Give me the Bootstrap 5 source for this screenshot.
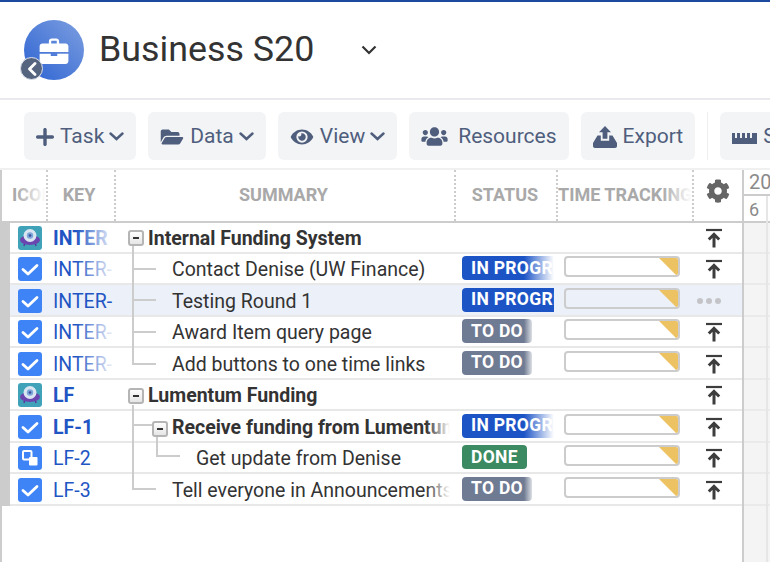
<!DOCTYPE html>
<html lang="en">
<head>
<meta charset="utf-8">
<title>Business S20</title>
<link href="https://cdn.jsdelivr.net/npm/bootstrap@5.3.0/dist/css/bootstrap.min.css" rel="stylesheet">
<style>
html,body{height:562px;overflow:hidden;background:#fff}
body{font-family:Roboto,"Liberation Sans",sans-serif;color:#333}
.page-shell{width:770px;height:562px;overflow:hidden;border-top:2px solid #1c4a9e}
.head-bar{height:98px;border-bottom:2px solid #e9e9ee;padding-left:24px}
.proj-logo{width:60px;height:60px;border-radius:50%;background:linear-gradient(45deg,#2c62d2,#7d9fe0);position:relative;flex:none}
.proj-logo svg.case{position:absolute;left:15px;top:18px}
.back-dot{position:absolute;left:-4px;top:37px;width:23px;height:23px;padding:0;border-radius:50%;background:#56657f;border:1px solid #dfe4ee;display:flex;align-items:center;justify-content:center}
.proj-title{font-size:35.8px;font-weight:400;margin:0 0 0 15px;color:#333;line-height:1;width:262px}
.tool-bar{height:68px;padding:12px 0 0 24px;gap:12px;width:800px}
.tool-btn{height:48px;background:#f3f4f6;border:0;border-radius:6px;color:#4f5e7d;font-size:21px;line-height:1;padding:1px 12px 0;display:flex;align-items:center;flex:none;white-space:nowrap;--bs-btn-hover-bg:#f3f4f6;--bs-btn-hover-color:#4f5e7d}
.tool-btn .lead-ic{margin-right:6px}
.tool-btn .lead-ic.wide-gap{margin-right:10px}
.tool-btn .chev-ic{margin-left:5px}
.tool-sep{width:1px;height:48px;background:#eceef0;flex:none}
.grid-zone{height:394px;border-top:2px solid #f0f0f0}
.grid-left{width:744px;flex:none;border-left:2px solid #ccc;border-right:2px solid #ccc;height:100%;position:relative}
.head-row{height:53px;border-bottom:2px solid #ccc;font-size:18px;font-weight:700;color:#a9a9a9}
.head-cell{height:100%;display:flex;align-items:center;justify-content:center;overflow:hidden;white-space:nowrap;flex:none;position:relative;border-right:2px dotted #ccc;padding-bottom:2px}
.c-ico{width:46px;justify-content:flex-start;padding-left:10px}.c-key{width:68px;padding-right:4px}.c-sum{width:340px;padding-right:3px}.c-stat{width:102px;padding-right:2px}.c-time{width:136px;justify-content:flex-start}.c-act{width:48px;border-right:0}
.gear-ic{margin-bottom:8px}
.head-cell.fades::after{content:"";position:absolute;right:0;top:0;bottom:0;width:30px;background:linear-gradient(90deg,rgba(255,255,255,0),#fff)}
.tree-row{height:31.5px;border-bottom:2px solid #e8e8e8;position:relative;background:#fff;font-size:19.5px;white-space:nowrap}
.tree-row.first-row{height:30.5px}
.tree-row.hovered{background:#ecf0f8}
.tree-row::before{content:"";position:absolute;left:0;top:-2px;bottom:-2px;width:8px;background:#ccc}
.row-cell{height:100%;display:flex;align-items:center;flex:none;overflow:hidden;position:relative}
.row-ico{width:46px;padding:2px 0 0 16px}
.row-key{width:68px;padding:3px 0 0 5px;color:#1f56c4}
.row-key.is-bold,.row-sum.is-bold{font-weight:700}
.row-sum{width:340px;color:#333;padding:3px 0 0 56px}
.row-sum.lvl-top{padding-left:32px}
.row-sum.lvl-sub{padding-left:80px}
.row-sum::after{content:"";position:absolute;right:0;top:0;bottom:0;width:30px;background:linear-gradient(90deg,rgba(255,255,255,0),#fff 80%)}
.hovered .row-sum::after,.hovered .row-key::after{display:none}
.row-key::after{content:"";position:absolute;right:0;top:0;bottom:0;width:40px;background:linear-gradient(90deg,rgba(255,255,255,0),#fff)}
.row-key.short-key::after{display:none}
.row-stat{width:98px;padding-left:6px}
.row-time{width:140px;padding-left:10px}
.row-act{width:48px;justify-content:center;padding:2px 8px 0 0}
.stat-tag{font-size:17.5px;font-weight:700;line-height:1;letter-spacing:.3px;border-radius:4px;padding:0 9px;height:24px;display:flex;align-items:center;color:#fff;flex:none}
.tag-prog{background:#1c54c6}.tag-todo{background:#6f7b93}.tag-done{background:#3b8a62}
.stat-fade::after{content:"";position:absolute;top:0;bottom:0;background:linear-gradient(90deg,rgba(255,255,255,0),#fff)}
.fade-prog::after{right:0;width:30px}
.fade-todo::after{left:68px;width:9px;background:linear-gradient(90deg,rgba(255,255,255,0),rgba(255,255,255,.85))}
.track-box{width:116px;height:21px;margin-bottom:3px;border:2px solid #ccc;border-radius:4px;position:relative;overflow:hidden}
.track-box::after{content:"";position:absolute;right:0;top:0;border-top:19px solid #ecc262;border-left:19px solid transparent}
.dots-more{display:flex;gap:3px;margin-right:10px}
.dots-more i{width:6px;height:6px;background:#c4c4c8;border-radius:50%;display:block}
.wire-layer{position:absolute;left:0;top:0;pointer-events:none;z-index:3}
.time-side{flex:1;height:100%;background:#f4f4f4;position:relative;overflow:hidden}
.time-year{height:26px;background:#fff;border-bottom:2px solid #ccc;color:#8a8a8a;font-size:20px;padding-left:5px;line-height:24px}
.time-day{height:27px;background:#fff;border-bottom:2px solid #ccc;color:#8a8a8a;font-size:18px;line-height:28px;padding-left:5px}
.time-row{height:31.5px;border-bottom:2px solid #eaeaea;background:#f4f4f4}
.time-row.first-row{height:30.5px}
.time-col{position:absolute;left:22px;top:26px;bottom:0;width:2px;background:#e6e6e6}
</style>
</head>
<body>
<svg width="0" height="0" class="position-absolute">
  <symbol id="i-saucer" viewBox="0 0 24 24"><rect width="24" height="24" rx="3" fill="#3fa2b8"/><path d="M6 20l1-4h10l1 4" stroke="#5b3a9e" stroke-width="1.500" fill="none"/><ellipse cx="12" cy="14" rx="10" ry="5" fill="#6a45b0"/><circle cx="12" cy="9.500" r="6.500" fill="#d9e6f2"/><circle cx="12" cy="9.500" r="3.200" fill="#7fa6d8"/><circle cx="12" cy="9.500" r="1.300" fill="#3a4d9a"/></symbol>
  <symbol id="i-check" viewBox="0 0 24 24"><rect width="24" height="24" rx="3" fill="#3f84f6"/><path d="M5 12.500 10 17l9-8.500" fill="none" stroke="#fff" stroke-width="2.800" stroke-linecap="round" stroke-linejoin="round"/></symbol>
  <symbol id="i-story" viewBox="0 0 24 24"><rect width="24" height="24" rx="3" fill="#3f84f6"/><rect x="5" y="5" width="8.500" height="8.500" rx="1" fill="#3f84f6" stroke="#fff" stroke-width="2"/><rect x="11" y="11" width="8.500" height="8.500" rx="1" fill="#fff"/></symbol>
  <symbol id="i-up" viewBox="0 0 18 20"><path d="M1 2h16" stroke="#3d3d3d" stroke-width="2.200"/><path d="M9 19.500V7M3.800 11.500 9 6.300l5.200 5.200" fill="none" stroke="#3d3d3d" stroke-width="3"/></symbol>
  <symbol id="i-chev" viewBox="0 0 15 9"><path d="M1.500 1.500 7.500 7l6-5.500" fill="none" stroke="#4f5e7d" stroke-width="2.400" stroke-linecap="round"/></symbol>
</svg>
<div class="page-shell">
  <header class="head-bar d-flex align-items-center">
    <div class="proj-logo">
      <svg class="case" width="30" height="26" viewBox="0 0 31 28"><path fill="#fff" d="M10 3.500C10 1.600 11.400.5 13 .5h5c1.600 0 3 1.100 3 3V6h7c1.600 0 3 1.200 3 3v6H0V9c0-1.800 1.400-3 3-3h7V3.500zm2.500 0V6h6V3.500c0-.3-.2-.5-.5-.5h-5c-.3 0-.5.200-.5.500zM0 17h12v2.500h7V17h12v8c0 1.700-1.400 3-3 3H3c-1.600 0-3-1.300-3-3v-8z"/></svg>
      <button class="back-dot" aria-label="Back"><svg width="10" height="14" viewBox="0 0 10 14"><path d="M8 1.500 2.500 7 8 12.500" fill="none" stroke="#fff" stroke-width="2.800" stroke-linecap="round" stroke-linejoin="round"/></svg></button>
    </div>
    <h1 class="proj-title">Business S20</h1>
    <svg width="16" height="10" viewBox="0 0 16 10"><path d="M1.500 1.500 8 8l6.500-6.500" fill="none" stroke="#333" stroke-width="2.200"/></svg>
  </header>
  <div class="tool-bar d-flex">
    <button class="btn tool-btn"><svg class="lead-ic" width="18" height="18" viewBox="0 0 18 18"><path fill="#4f5e7d" d="M7.300 1.500C7.300.7 8 0 9 0s1.700.7 1.700 1.500v5.800h5.800c.8 0 1.500.7 1.500 1.700s-.7 1.700-1.500 1.700h-5.800v5.800c0 .8-.7 1.500-1.700 1.500s-1.700-.7-1.700-1.500v-5.800H1.500C.7 10.700 0 10 0 9s.7-1.700 1.500-1.700h5.800z"/></svg>Task<svg class="chev-ic" width="15" height="9"><use href="#i-chev"/></svg></button>
    <button class="btn tool-btn"><svg class="lead-ic" width="24" height="20" viewBox="0 0 576 512"><path fill="#4f5e7d" d="M572.694 292.093L500.27 416.248A63.997 63.997 0 0 1 444.989 448H45.025c-18.523 0-30.064-20.093-20.731-36.093l72.424-124.155A64 64 0 0 1 152 256h399.964c18.523 0 30.064 20.093 20.73 36.093zM152 224h328v-48c0-26.51-21.49-48-48-48H272l-64-64H48C21.49 64 0 85.49 0 112v278.046l69.077-118.418C86.214 242.25 117.989 224 152 224z"/></svg>Data<svg class="chev-ic" width="15" height="9"><use href="#i-chev"/></svg></button>
    <button class="btn tool-btn"><svg class="lead-ic" width="24" height="20" viewBox="0 0 576 512"><path fill="#4f5e7d" d="M572.520 241.400C518.290 135.590 410.930 64 288 64S57.680 135.640 3.480 241.410a32.350 32.350 0 0 0 0 29.190C57.710 376.410 165.070 448 288 448s230.320-71.640 284.520-177.410a32.350 32.350 0 0 0 0-29.190zM288 400a144 144 0 1 1 144-144 143.930 143.930 0 0 1-144 144zm0-240a95.310 95.310 0 0 0-25.310 3.790 47.850 47.850 0 0 1-66.900 66.900A95.780 95.780 0 1 0 288 160z"/></svg>View<svg class="chev-ic" width="15" height="9"><use href="#i-chev"/></svg></button>
    <button class="btn tool-btn"><svg class="lead-ic wide-gap" width="27" height="21" viewBox="0 0 640 512"><path fill="#4f5e7d" d="M96 224c35.300 0 64-28.700 64-64s-28.700-64-64-64-64 28.700-64 64 28.700 64 64 64zm448 0c35.300 0 64-28.700 64-64s-28.700-64-64-64-64 28.700-64 64 28.700 64 64 64zm32 32h-64c-17.600 0-33.500 7.100-45.100 18.600 40.300 22.100 68.900 62 75.100 109.400h66c17.700 0 32-14.300 32-32v-32c0-35.300-28.700-64-64-64zm-256 0c61.900 0 112-50.100 112-112S381.900 32 320 32 208 82.100 208 144s50.100 112 112 112zm76.800 32h-8.300c-20.800 10-43.900 16-68.500 16s-47.600-6-68.500-16h-8.300C179.600 288 128 339.600 128 403.200V432c0 26.500 21.500 48 48 48h288c26.500 0 48-21.500 48-48v-28.800c0-63.600-51.600-115.200-115.200-115.200zm-223.700-13.400C161.500 263.100 145.600 256 128 256H64c-35.300 0-64 28.700-64 64v32c0 17.700 14.300 32 32 32h65.900c6.300-47.400 34.900-87.300 75.200-109.400z"/></svg>Resources</button>
    <button class="btn tool-btn"><svg class="lead-ic" width="24" height="22" viewBox="0 0 24 22"><path fill="#4f5e7d" d="M12 0l6 6.200h-3.600v6.600H9.600V6.200H6zM4.500 9.500h3.300v5.300h8.400V9.500h3.300L24 17v3c0 1.200-.8 2-2 2H2c-1.200 0-2-.8-2-2v-3z"/></svg>Export</button>
    <div class="tool-sep"></div>
    <button class="btn tool-btn"><svg class="lead-ic" width="25" height="14" viewBox="0 0 25 14"><path fill="#4f5e7d" d="M0 3h3v5h2V3h3v5h2V3h3v5h2V3h3v5h2V3h5v11H0z"/></svg>Show</button>
  </div>
  <div class="grid-zone d-flex">
    <div class="grid-left">
      <div class="head-row d-flex">
        <div class="head-cell c-ico fades">ICON</div>
        <div class="head-cell c-key">KEY</div>
        <div class="head-cell c-sum">SUMMARY</div>
        <div class="head-cell c-stat">STATUS</div>
        <div class="head-cell c-time fades">TIME TRACKING</div>
        <div class="head-cell c-act"><svg class="gear-ic" width="24" height="24" viewBox="0 0 512 512"><path fill="#666" d="M487.400 315.700l-42.600-24.600c4.300-23.200 4.300-47 0-70.200l42.600-24.600c4.900-2.800 7.100-8.600 5.500-14-11.100-35.600-30-67.800-54.700-94.600-3.800-4.100-10-5.100-14.800-2.300L380.800 110c-17.900-15.400-38.500-27.300-60.800-35.100V25.800c0-5.600-3.900-10.500-9.400-11.700-36.700-8.200-74.300-7.800-109.200 0-5.500 1.200-9.400 6.100-9.400 11.700V75c-22.200 7.900-42.800 19.800-60.800 35.100L88.700 85.500c-4.900-2.800-11-1.900-14.800 2.300-24.700 26.700-43.600 58.900-54.700 94.600-1.700 5.400.6 11.200 5.500 14L67.300 221c-4.300 23.200-4.300 47 0 70.200l-42.600 24.600c-4.900 2.800-7.100 8.600-5.500 14 11.100 35.600 30 67.800 54.700 94.600 3.800 4.100 10 5.100 14.800 2.300l42.600-24.600c17.900 15.400 38.500 27.300 60.800 35.100v49.200c0 5.600 3.900 10.500 9.400 11.700 36.700 8.200 74.300 7.800 109.200 0 5.500-1.200 9.400-6.100 9.400-11.700v-49.200c22.200-7.900 42.800-19.800 60.800-35.100l42.600 24.600c4.900 2.800 11 1.900 14.800-2.300 24.700-26.700 43.600-58.900 54.700-94.600 1.500-5.500-.7-11.300-5.600-14.100zM256 336c-44.100 0-80-35.900-80-80s35.900-80 80-80 80 35.900 80 80-35.900 80-80 80z"/></svg></div>
      </div>

      <div class="tree-row first-row d-flex">
        <div class="row-cell row-ico"><svg width="24" height="24"><use href="#i-saucer"/></svg></div>
        <div class="row-cell row-key is-bold">INTER</div>
        <div class="row-cell row-sum is-bold lvl-top">Internal Funding System</div>
        <div class="row-cell row-stat"></div><div class="row-cell row-time"></div>
        <div class="row-cell row-act"><svg width="18" height="20"><use href="#i-up"/></svg></div>
      </div>
      <div class="tree-row d-flex">
        <div class="row-cell row-ico"><svg width="24" height="24"><use href="#i-check"/></svg></div>
        <div class="row-cell row-key">INTER-</div>
        <div class="row-cell row-sum">Contact Denise (UW Finance)</div>
        <div class="row-cell row-stat stat-fade fade-prog"><span class="badge stat-tag tag-prog">IN PROGRESS</span></div>
        <div class="row-cell row-time"><div class="track-box"></div></div>
        <div class="row-cell row-act"><svg width="18" height="20"><use href="#i-up"/></svg></div>
      </div>
      <div class="tree-row hovered d-flex">
        <div class="row-cell row-ico"><svg width="24" height="24"><use href="#i-check"/></svg></div>
        <div class="row-cell row-key">INTER-</div>
        <div class="row-cell row-sum">Testing Round 1</div>
        <div class="row-cell row-stat"><span class="badge stat-tag tag-prog">IN PROGRESS</span></div>
        <div class="row-cell row-time"><div class="track-box"></div></div>
        <div class="row-cell row-act"><span class="dots-more"><i></i><i></i><i></i></span></div>
      </div>
      <div class="tree-row d-flex">
        <div class="row-cell row-ico"><svg width="24" height="24"><use href="#i-check"/></svg></div>
        <div class="row-cell row-key">INTER-</div>
        <div class="row-cell row-sum">Award Item query page</div>
        <div class="row-cell row-stat stat-fade fade-todo"><span class="badge stat-tag tag-todo">TO DO</span></div>
        <div class="row-cell row-time"><div class="track-box"></div></div>
        <div class="row-cell row-act"><svg width="18" height="20"><use href="#i-up"/></svg></div>
      </div>
      <div class="tree-row d-flex">
        <div class="row-cell row-ico"><svg width="24" height="24"><use href="#i-check"/></svg></div>
        <div class="row-cell row-key">INTER-</div>
        <div class="row-cell row-sum">Add buttons to one time links</div>
        <div class="row-cell row-stat stat-fade fade-todo"><span class="badge stat-tag tag-todo">TO DO</span></div>
        <div class="row-cell row-time"><div class="track-box"></div></div>
        <div class="row-cell row-act"><svg width="18" height="20"><use href="#i-up"/></svg></div>
      </div>
      <div class="tree-row d-flex">
        <div class="row-cell row-ico"><svg width="24" height="24"><use href="#i-saucer"/></svg></div>
        <div class="row-cell row-key is-bold short-key">LF</div>
        <div class="row-cell row-sum is-bold lvl-top">Lumentum Funding</div>
        <div class="row-cell row-stat"></div><div class="row-cell row-time"></div>
        <div class="row-cell row-act"><svg width="18" height="20"><use href="#i-up"/></svg></div>
      </div>
      <div class="tree-row d-flex">
        <div class="row-cell row-ico"><svg width="24" height="24"><use href="#i-check"/></svg></div>
        <div class="row-cell row-key is-bold short-key">LF-1</div>
        <div class="row-cell row-sum is-bold">Receive funding from Lumentum</div>
        <div class="row-cell row-stat stat-fade fade-prog"><span class="badge stat-tag tag-prog">IN PROGRESS</span></div>
        <div class="row-cell row-time"><div class="track-box"></div></div>
        <div class="row-cell row-act"><svg width="18" height="20"><use href="#i-up"/></svg></div>
      </div>
      <div class="tree-row d-flex">
        <div class="row-cell row-ico"><svg width="24" height="24"><use href="#i-story"/></svg></div>
        <div class="row-cell row-key short-key">LF-2</div>
        <div class="row-cell row-sum lvl-sub">Get update from Denise</div>
        <div class="row-cell row-stat"><span class="badge stat-tag tag-done">DONE</span></div>
        <div class="row-cell row-time"><div class="track-box"></div></div>
        <div class="row-cell row-act"><svg width="18" height="20"><use href="#i-up"/></svg></div>
      </div>
      <div class="tree-row d-flex">
        <div class="row-cell row-ico"><svg width="24" height="24"><use href="#i-check"/></svg></div>
        <div class="row-cell row-key short-key">LF-3</div>
        <div class="row-cell row-sum">Tell everyone in Announcements</div>
        <div class="row-cell row-stat stat-fade fade-todo"><span class="badge stat-tag tag-todo">TO DO</span></div>
        <div class="row-cell row-time"><div class="track-box"></div></div>
        <div class="row-cell row-act"><svg width="18" height="20"><use href="#i-up"/></svg></div>
      </div>

      <svg class="wire-layer" width="180" height="340" viewBox="0 0 180 340">
        <defs><linearGradient id="boxg" x1="0" y1="0" x2="0" y2="1"><stop offset="0" stop-color="#fff"/><stop offset="1" stop-color="#e4e4e4"/></linearGradient></defs>
        <g fill="#ccc">
          <rect x="130" y="76" width="2" height="119"/>
          <rect x="132" y="98" width="22" height="2"/><rect x="132" y="129" width="22" height="2"/><rect x="132" y="161" width="22" height="2"/><rect x="132" y="193" width="22" height="2"/>
          <rect x="130" y="235" width="2" height="85"/>
          <rect x="132" y="254" width="20" height="2"/><rect x="132" y="318" width="22" height="2"/>
          <rect x="154" y="267" width="2" height="20"/><rect x="156" y="285" width="22" height="2"/>
        </g>
        <g fill="url(#boxg)" stroke="#b5b5b5" stroke-width="2">
          <rect x="127" y="61" width="14" height="14" rx="2"/><rect x="127" y="219" width="14" height="14" rx="2"/><rect x="151" y="252" width="14" height="14" rx="2"/>
        </g>
        <g fill="#333"><rect x="131" y="67" width="6" height="2"/><rect x="131" y="225" width="6" height="2"/><rect x="155" y="258" width="6" height="2"/></g>
      </svg>
    </div>
    <div class="time-side">
      <div class="time-year">20</div>
      <div class="time-day">6</div>
      <div class="time-row first-row"></div>
      <div class="time-row"></div><div class="time-row"></div><div class="time-row"></div><div class="time-row"></div>
      <div class="time-row"></div><div class="time-row"></div><div class="time-row"></div><div class="time-row"></div>
      <div class="time-col"></div>
    </div>
  </div>
</div>
<script src="https://cdn.jsdelivr.net/npm/bootstrap@5.3.0/dist/js/bootstrap.bundle.min.js"></script>
</body>
</html>
